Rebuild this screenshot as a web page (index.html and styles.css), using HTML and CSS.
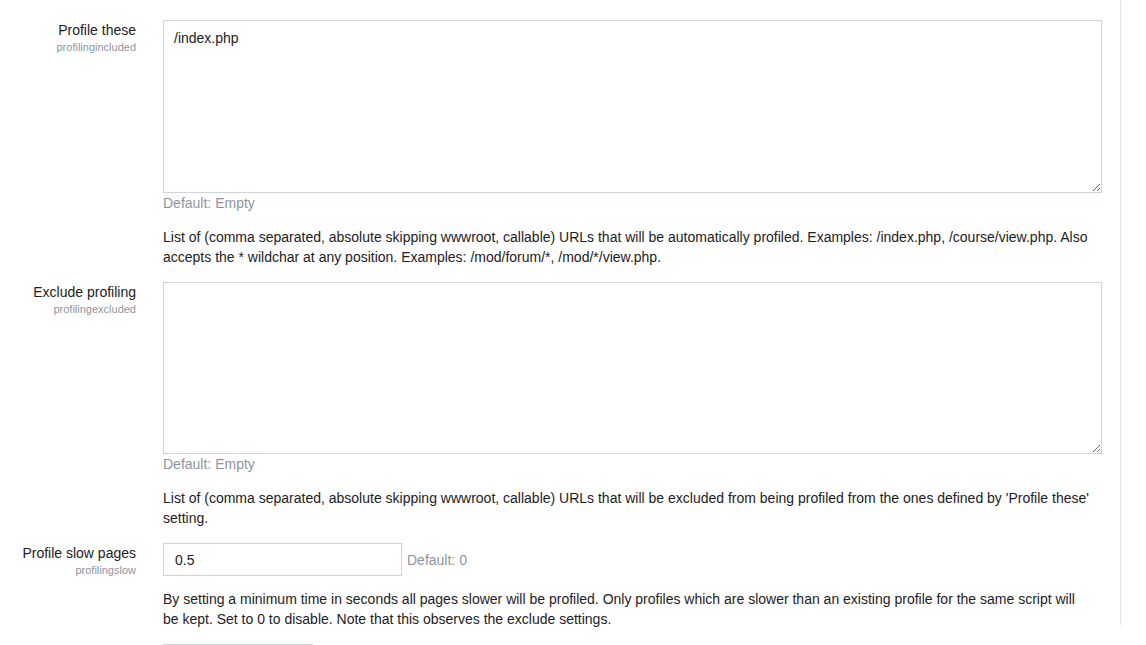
FILE: index.html
```html
<html lang="en">
<head>
  <meta charset="UTF-8" />
  <title>Profiling settings</title>
  <meta name="viewport" content="width=device-width, initial-scale=1.0" />
  <link rel="stylesheet" href="styles.css">
</head>
<body>
  <div class="page">
    <div class="settings">
      <div class="setting first">
        <div class="label"></div>
        <div class="content">
          <div class="desc">If you enable this setting, then profiling will be available in this site and you will be able to define its behavior by configuring the next options.</div>
        </div>
      </div>

      <div class="setting">
        <div class="label">
          <div class="name">Profile these</div>
          <div class="key">profilingincluded</div>
        </div>
        <div class="content">
          <textarea class="area">/index.php</textarea>
          <div class="default">Default: Empty</div>
          <div class="desc">List of (comma separated, absolute skipping wwwroot, callable) URLs that will be automatically profiled. Examples: /index.php, /course/view.php. Also accepts the * wildchar at any position. Examples: /mod/forum/*, /mod/*/view.php.</div>
        </div>
      </div>

      <div class="setting">
        <div class="label">
          <div class="name">Exclude profiling</div>
          <div class="key">profilingexcluded</div>
        </div>
        <div class="content">
          <textarea class="area"></textarea>
          <div class="default">Default: Empty</div>
          <div class="desc">List of (comma separated, absolute skipping wwwroot, callable) URLs that will be excluded from being profiled from the ones defined by 'Profile these' setting.</div>
        </div>
      </div>

      <div class="setting">
        <div class="label">
          <div class="name">Profile slow pages</div>
          <div class="key">profilingslow</div>
        </div>
        <div class="content">
          <div class="inline">
            <input class="field" type="text" value="0.5">
            <span class="default-inline">Default: 0</span>
          </div>
          <div class="desc">By setting a minimum time in seconds all pages slower will be profiled. Only profiles which are slower than an existing profile for the same script will be kept. Set to 0 to disable. Note that this observes the exclude settings.</div>
        </div>
      </div>

      <div class="setting">
        <div class="label"></div>
        <div class="content">
          <input class="field short" type="text" value="">
        </div>
      </div>
    </div>
  </div>
</body>
</html>
```

FILE: styles.css
```css
html, body {
  margin: 0;
  height: 100%;
  overflow: hidden;
}

body {
  font-family: "Liberation Sans", Arial, sans-serif;
  font-size: 14px;
  line-height: 20px;
  color: #1d2125;
  background: #fff;
}

.page {
  width: 1120px;
  height: 100%;
  border-right: 1px solid #dee2e6;
}

.settings {
  margin-top: -20px;
}

.setting {
  display: flex;
  margin-bottom: 15px;
}

.setting.first {
  margin-bottom: 20px;
}

.label {
  width: 136px;
  flex: none;
  text-align: right;
}

.name {
  color: #1d2125;
}

.key {
  font-size: 11px;
  line-height: 14px;
  color: #8f959e;
}

.content {
  margin-left: 27px;
  width: 939px;
}

.area {
  display: block;
  box-sizing: border-box;
  width: 939px;
  height: 172.5px;
  margin: 0;
  padding: 7px 10px;
  border: 1px solid #ced4da;
  border-radius: 0;
  font: inherit;
  color: #1d2125;
  resize: vertical;
}

.default {
  color: #8f959e;
  line-height: 20px;
  margin-bottom: 14px;
}

.desc {
  max-width: 929px;
  color: #1d2125;
}

.inline {
  display: flex;
  align-items: center;
  margin-bottom: 13px;
}

.field {
  box-sizing: border-box;
  width: 239px;
  height: 33px;
  margin: 0;
  padding: 6px 11px;
  border: 1px solid #ced4da;
  border-radius: 0;
  font: inherit;
  color: #1d2125;
}

.field.short {
  width: 150px;
}

.default-inline {
  margin-left: 5px;
  color: #8f959e;
}
```
